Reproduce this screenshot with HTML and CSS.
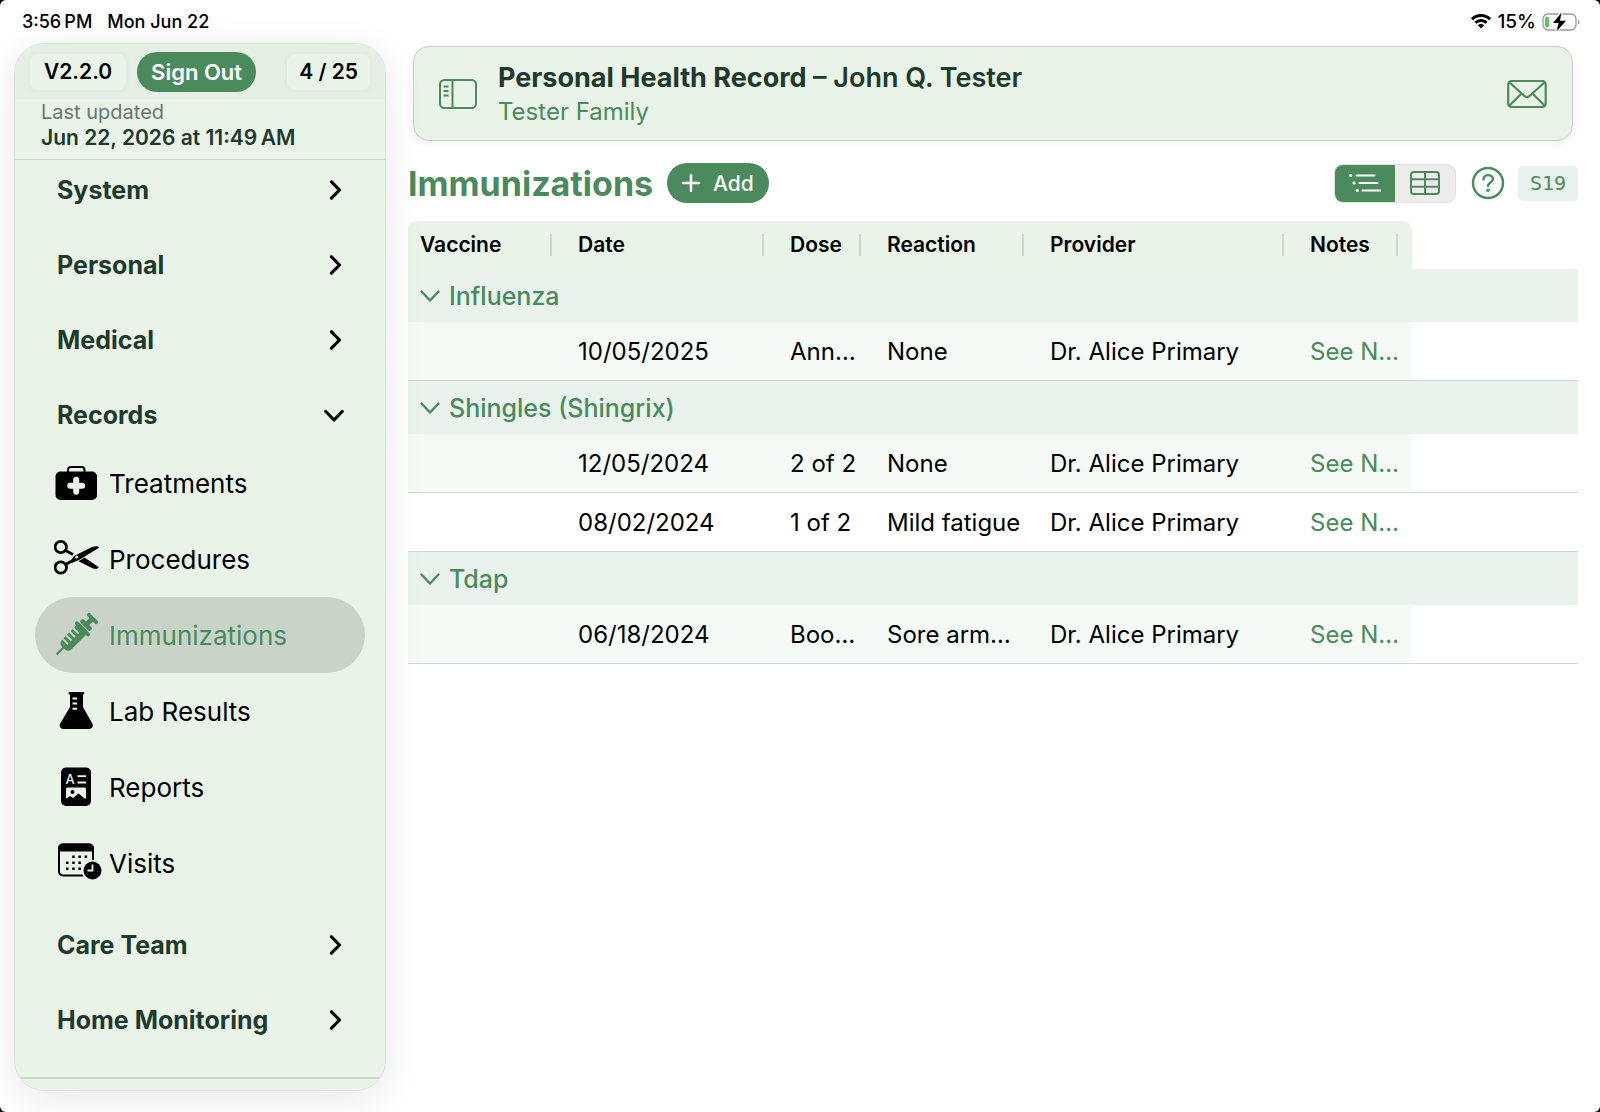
FILE: index.html
```
<!DOCTYPE html>
<html lang="en">
<head>
    <meta charset="UTF-8">
    <meta name="viewport" content="width=device-width, initial-scale=1.0">
    <title>Personal Health Record</title>
    <link rel="stylesheet" href="styles.css">
</head>
<body>
<div class="screen">

    <header class="status-bar">
        <div class="status-left">
            <span>3:56&#8239;PM</span>
            <span>Mon Jun 22</span>
        </div>
        <div class="status-right">
            <svg width="20" height="15" viewBox="0 0 20 15" fill="none" stroke="#000" stroke-width="3">
                <path d="M1 5.2a12.8 12.8 0 0 1 18 0"/>
                <path d="M4.4 8.7a8 8 0 0 1 11.2 0"/>
                <path d="M10 14.5l-3.2-3.2a4.5 4.5 0 0 1 6.4 0z" fill="#000" stroke="none"/>
            </svg>
            <span>15%</span>
            <svg width="38" height="20" viewBox="0 0 38 20">
                <rect x="1" y="2" width="33" height="16" rx="5" fill="none" stroke="#9b9b9b" stroke-width="1.3"/>
                <path d="M36 7.5v5c2-1 2-4 0-5z" fill="#9b9b9b"/>
                <rect x="3" y="4.500" width="4" height="11" rx="2" fill="#5ac75a"/>
                <path d="M19.500 .500L11 11h5.500l-2 8.500L24 8.800h-6z" fill="#000" stroke="#fff" stroke-width="2.500" paint-order="stroke"/>
            </svg>
        </div>
    </header>

    <div class="layout">
        <aside class="sidebar">
            <div class="sidebar-top">
                <span class="chip">V2.2.0</span>
                <button class="sign-out">Sign Out</button>
                <span class="chip count">4 / 25</span>
            </div>
            <div class="updated">
                <span class="updated-label">Last updated</span>
                <strong class="updated-date">Jun 22, 2026 at 11:49&#8239;AM</strong>
            </div>

            <nav class="nav">
                <button class="group">System
                    <svg class="chev" viewBox="0 0 20 20"><path d="M7.500 1.800l8 8.200-8 8.200"/></svg>
                </button>
                <button class="group">Personal
                    <svg class="chev" viewBox="0 0 20 20"><path d="M7.500 1.800l8 8.200-8 8.200"/></svg>
                </button>
                <button class="group">Medical
                    <svg class="chev" viewBox="0 0 20 20"><path d="M7.500 1.800l8 8.200-8 8.200"/></svg>
                </button>
                <button class="group">Records
                    <svg class="chev" viewBox="0 0 20 20"><path d="M1.800 6.500l8.200 8.500 8.200-8.500"/></svg>
                </button>
                <div class="items">
                    <a class="item" href="#treatments">
                        <svg viewBox="0 0 48 44">
                            <path d="M14 12V9a3 3 0 0 1 3-3h10.500a3 3 0 0 1 3 3v3" fill="none" stroke="currentColor" stroke-width="2"/>
                            <rect x="1.500" y="10.500" width="41.500" height="28.500" rx="5"/>
                            <path class="cut" d="M22.200 18.700v12M16.200 24.700h12" stroke-width="6" stroke-linecap="round"/>
                        </svg>
                        Treatments
                    </a>
                    <a class="item" href="#procedures">
                        <svg viewBox="0 0 48 44">
                            <g fill="none" stroke="currentColor" stroke-width="2.800">
                                <circle cx="6.800" cy="10" r="5.700"/>
                                <circle cx="6.800" cy="30.500" r="5.700"/>
                                <path d="M11.500 13.500l7.500 4M11.500 27.500l8-4.500"/>
                            </g>
                            <path d="M17 24.500c1-1.500 1-4 4-6L38 10c3.500-1.300 7-.8 7 .7L25 23l-7.500 3z"/>
                            <path d="M24.500 24.200l6-3.700 14 9.500c1 1.700-3 2.500-6 1.300z"/>
                            <circle class="cut-fill" cx="22.800" cy="20" r="1.600"/>
                        </svg>
                        Procedures
                    </a>
                    <a class="item active" href="#immunizations">
                        <svg viewBox="0 0 48 44">
                            <g transform="translate(2.500 41.500) rotate(-45)">
                                <rect x="0" y="-1.100" width="13" height="2.200" rx="1.100"/>
                                <rect x="9.500" y="-6.500" width="29" height="13.500" rx="4.500"/>
                                <path class="cut" d="M15.500-8v8M20.500-8v8M25.500-8v8M30.500-8v8" stroke-width="2" stroke-linecap="round"/>
                                <rect x="34.500" y="-9.500" width="4" height="19.500" rx="2"/>
                                <rect x="39.500" y="-7" width="4.500" height="14" rx="1.500"/>
                                <rect x="43" y="-2.500" width="8" height="5"/>
                                <rect x="49" y="-7" width="3.800" height="14" rx="1.900"/>
                            </g>
                        </svg>
                        Immunizations
                    </a>
                    <a class="item" href="#labs">
                        <svg viewBox="0 0 48 44">
                            <path d="M15.500 3h13.500a1.300 1.300 0 0 1 0 2.600V18L38 34c2 3 0 6-3 6H9.500c-3 0-5-3-3-6L16 18V5.600a1.300 1.300 0 0 1-.5-2.600z"/>
                            <path class="cut" d="M18.500 9.500h4.500M18.500 14.500h4.500M18.500 19.800h4.500" stroke-width="2"/>
                        </svg>
                        Lab Results
                    </a>
                    <a class="item" href="#reports">
                        <svg viewBox="0 0 48 44">
                            <rect x="7" y="2.500" width="30" height="38.500" rx="5"/>
                            <text class="cut-fill icon-letter" x="11.500" y="19">A</text>
                            <path class="cut" d="M23.500 11.200h8.500M23.500 17.500h8.500" stroke-width="1.800"/>
                            <rect class="cut-fill" x="12" y="22.500" width="20" height="11.500" rx="1.500"/>
                            <circle cx="18.500" cy="27" r="2"/>
                            <path d="M12 35v-1l4-3 3 2 5.500-4.500 7.500 6V35z"/>
                        </svg>
                        Reports
                    </a>
                    <a class="item" href="#visits">
                        <svg viewBox="0 0 48 44">
                            <rect x="5" y="3.500" width="34" height="31" rx="4" fill="none" stroke="currentColor" stroke-width="2"/>
                            <path d="M4 10.500V7a4.500 4.500 0 0 1 4.500-4.500h27A4.500 4.500 0 0 1 40 7v3.500z"/>
                            <path d="M18.200 15.700h15M12 21.700h15M12 27.700h15" fill="none" stroke="currentColor" stroke-width="2.500" stroke-dasharray="2.500 3.700"/>
                            <circle class="cut-fill" cx="38.500" cy="29.500" r="10.800"/>
                            <circle cx="38.500" cy="29.500" r="9"/>
                            <path class="cut" d="M38.500 23.500v6h-5" stroke-width="1.800"/>
                        </svg>
                        Visits
                    </a>
                </div>
                <button class="group">Care Team
                    <svg class="chev" viewBox="0 0 20 20"><path d="M7.500 1.800l8 8.200-8 8.200"/></svg>
                </button>
                <button class="group">Home Monitoring
                    <svg class="chev" viewBox="0 0 20 20"><path d="M7.500 1.800l8 8.200-8 8.200"/></svg>
                </button>
            </nav>
        </aside>

        <main class="main">
            <section class="record-card">
                <button class="icon-btn" aria-label="Toggle sidebar">
                    <svg width="38" height="30" viewBox="0 0 38 30" fill="none" stroke="currentColor" stroke-width="2">
                        <rect x="1" y="1" width="36" height="28" rx="4.500"/>
                        <path d="M13.500 1v28M4.500 7.500h5M4.500 12h5M4.500 16.500h5"/>
                    </svg>
                </button>
                <div class="record-text">
                    <h1 class="record-title">Personal Health Record <span class="patient">– John Q. Tester</span></h1>
                    <p class="record-family">Tester Family</p>
                </div>
                <button class="icon-btn" aria-label="Messages">
                    <svg width="40" height="28" viewBox="0 0 40 28" fill="none" stroke="currentColor" stroke-width="2.200">
                        <rect x="1.200" y="1" width="37.500" height="26" rx="3.500"/>
                        <path d="M2 2l15.500 14a3.500 3.500 0 0 0 5 0L38 2M2 26l12.500-12.500M38 26L25.500 13.500"/>
                    </svg>
                </button>
            </section>

            <div class="toolbar">
                <h2 class="page-title">Immunizations</h2>
                <button class="add-btn">
                    <svg width="18" height="18" viewBox="0 0 18 18"><path d="M9 1v16M1 9h16" stroke="#fff" stroke-width="2.500" stroke-linecap="round"/></svg>
                    Add
                </button>
                <div class="segmented">
                    <button class="seg on" aria-label="Grouped list">
                        <svg width="32" height="20" viewBox="0 0 32 20" fill="none" stroke="currentColor" stroke-width="2" stroke-linecap="round">
                            <path d="M7.500 2.500h18M10.500 10h18M13.500 17.500h18"/>
                            <path d="M1.700 2.500h.01M5 10h.01M8.200 17.500h.01" stroke-width="3.200"/>
                        </svg>
                    </button>
                    <button class="seg" aria-label="Table">
                        <svg width="30" height="24" viewBox="0 0 30 24" fill="none" stroke="currentColor" stroke-width="2">
                            <rect x="1" y="1" width="28" height="22" rx="3"/>
                            <path d="M15 1v22M1 8.300h28M1 15.700h28"/>
                        </svg>
                    </button>
                </div>
                <button class="icon-btn" aria-label="Help">
                    <svg width="34" height="34" viewBox="0 0 34 34" fill="none" stroke="currentColor" stroke-width="2.400" stroke-linecap="round">
                        <circle cx="17" cy="17" r="15"/>
                        <path d="M12.500 13.500c0-6 9.500-5.500 9.500-.5 0 3.500-5 3.500-5 7"/>
                        <circle cx="17" cy="24.200" r="1.700" fill="currentColor" stroke="none"/>
                    </svg>
                </button>
                <span class="code">S19</span>
            </div>

            <table class="records">
                <colgroup>
                    <col class="c-vaccine"><col class="c-date"><col class="c-dose"><col class="c-reaction"><col class="c-provider"><col class="c-notes"><col>
                </colgroup>
                <thead>
                    <tr>
                        <th><span>Vaccine</span></th>
                        <th><span>Date</span></th>
                        <th><span>Dose</span></th>
                        <th><span>Reaction</span></th>
                        <th><span>Provider</span></th>
                        <th><span>Notes</span></th>
                        <td></td>
                    </tr>
                </thead>
                <tbody>
                    <tr class="vaccine">
                        <th colspan="7"><button class="toggle"><svg viewBox="0 0 20 12"><path d="M1.500 1.500L10 10.500l8.500-9"/></svg>Influenza</button></th>
                    </tr>
                    <tr class="tint">
                        <td></td><td>10/05/2025</td><td>Ann…</td><td>None</td><td>Dr. Alice Primary</td><td><a href="#notes">See N…</a></td><td></td>
                    </tr>
                </tbody>
                <tbody>
                    <tr class="vaccine">
                        <th colspan="7"><button class="toggle"><svg viewBox="0 0 20 12"><path d="M1.500 1.500L10 10.500l8.500-9"/></svg>Shingles (Shingrix)</button></th>
                    </tr>
                    <tr class="tint">
                        <td></td><td>12/05/2024</td><td>2 of 2</td><td>None</td><td>Dr. Alice Primary</td><td><a href="#notes">See N…</a></td><td></td>
                    </tr>
                    <tr>
                        <td></td><td>08/02/2024</td><td>1 of 2</td><td>Mild fatigue</td><td>Dr. Alice Primary</td><td><a href="#notes">See N…</a></td><td></td>
                    </tr>
                </tbody>
                <tbody>
                    <tr class="vaccine">
                        <th colspan="7"><button class="toggle"><svg viewBox="0 0 20 12"><path d="M1.500 1.500L10 10.500l8.500-9"/></svg>Tdap</button></th>
                    </tr>
                    <tr class="tint">
                        <td></td><td>06/18/2024</td><td>Boo…</td><td>Sore arm…</td><td>Dr. Alice Primary</td><td><a href="#notes">See N…</a></td><td></td>
                    </tr>
                </tbody>
            </table>
        </main>
    </div>

</div>
</body>
</html>
```
FILE: styles.css
```
:root {
    --green: #4a8a5c;
    --dark: #20392b;
    --mint: #e9f3e8;
    --line: #cdd5cf;
}
* {
    box-sizing: border-box;
}
html {
    background: #000;
}
body {
    margin: 0;
    font-family: Inter, "Liberation Sans", sans-serif;
    color: #000;
}
button {
    border: 0;
    padding: 0;
    background: none;
    font: inherit;
    color: inherit;
    cursor: pointer;
}
a {
    color: inherit;
    text-decoration: none;
}
svg {
    display: block;
    flex: none;
}
.screen {
    min-height: 100vh;
    display: flex;
    flex-direction: column;
    background: #fff;
    border-radius: 6px;
    overflow: hidden;
}

/* status bar */
.status-bar {
    display: flex;
    justify-content: space-between;
    align-items: center;
    height: 43px;
    padding: 0 20px 0 22px;
    font-size: 19px;
    font-weight: 500;
}
.status-left {
    display: flex;
    gap: 15px;
    font-size: 18px;
}
.status-right {
    display: flex;
    align-items: center;
    gap: 6px;
}

.layout {
    flex: 1;
    display: flex;
    gap: 22px;
    padding: 0 22px 21px 14px;
}

/* sidebar */
.sidebar {
    position: relative;
    z-index: 1;
    flex: none;
    width: 372px;
    background: var(--mint);
    border: 1px solid #dde6de;
    border-radius: 30px;
    box-shadow: 0 8px 40px rgba(0, 0, 0, 0.09);
    overflow: hidden;
    display: flex;
    flex-direction: column;
}
.sidebar-top {
    display: flex;
    align-items: center;
    height: 55px;
    padding: 0 15px;
    background: #e5efe5;
}
.chip {
    padding: 0 14px;
    line-height: 36px;
    font-size: 21px;
    font-weight: 600;
    border-radius: 8px;
    background: var(--mint);
    box-shadow: 0 0 8px rgba(0, 0, 0, 0.04);
}
.count {
    margin-left: auto;
    padding: 0 12px;
}
.sign-out {
    height: 40px;
    margin-left: 11px;
    padding: 0 14px;
    border-radius: 20px;
    background: var(--green);
    color: #fff;
    font-size: 22px;
    font-weight: 600;
}
.updated {
    display: flex;
    flex-direction: column;
    height: 61px;
    padding: 0 26px;
    border-bottom: 1px solid var(--line);
}
.updated-label {
    line-height: 26px;
    font-size: 20px;
    color: #6c766e;
}
.updated-date {
    line-height: 26px;
    font-size: 21px;
    font-weight: 600;
    color: var(--dark);
}
.nav {
    flex: 1;
    display: flex;
    flex-direction: column;
    margin-bottom: 11px;
    border-bottom: 2px solid var(--line);
}
.group {
    display: flex;
    justify-content: space-between;
    align-items: center;
    height: 60px;
    padding: 0 41px 0 42px;
    font-size: 25px;
    font-weight: 700;
    color: var(--dark);
}
.group + .group {
    margin-top: 15px;
}
.items + .group {
    margin-top: 14px;
}
.chev {
    width: 20px;
    height: 20px;
    fill: none;
    stroke: #000;
    stroke-width: 3.2px;
    stroke-linecap: round;
    stroke-linejoin: round;
}
.items {
    padding: 0 20px;
}
.item {
    display: flex;
    align-items: center;
    gap: 7px;
    height: 76px;
    padding-left: 19px;
    border-radius: 38px;
    font-size: 26px;
}
.item svg {
    width: 48px;
    height: 44px;
    fill: currentColor;
}
.item .cut {
    fill: none;
    stroke: var(--mint);
}
.item .cut-fill {
    fill: var(--mint);
}
.icon-letter {
    font-size: 13px;
    font-weight: 500;
}
.active {
    background: #c9d3c8;
    color: var(--green);
}
.active .cut {
    stroke: #c9d3c8;
}

/* main column */
.main {
    flex: 1;
    min-width: 0;
    padding-top: 3px;
}
.icon-btn {
    color: var(--green);
}
.record-card {
    display: flex;
    align-items: center;
    height: 95px;
    margin: 0 5px;
    padding: 0 25px;
    background: var(--mint);
    border: 1px solid #c8cfc9;
    border-radius: 16px;
    box-shadow: 0 3px 8px rgba(0, 0, 0, 0.06);
}
.record-text {
    flex: 1;
    margin-left: 21px;
    padding-top: 2px;
}
.record-title {
    margin: 0;
    line-height: 34px;
    font-size: 27px;
    font-weight: 700;
    color: var(--dark);
}
.patient {
    font-weight: 600;
}
.record-family {
    margin: 0;
    line-height: 34px;
    font-size: 24px;
    color: var(--green);
}
.toolbar {
    display: flex;
    align-items: center;
    height: 40px;
    margin: 22px 0 18px;
}
.page-title {
    margin: 0;
    font-size: 34px;
    font-weight: 700;
    color: var(--green);
}
.add-btn {
    display: flex;
    align-items: center;
    gap: 13px;
    height: 40px;
    margin-left: 14px;
    padding: 0 15px;
    border-radius: 20px;
    background: var(--green);
    color: #fff;
    font-size: 21px;
    font-weight: 500;
}
.segmented {
    display: flex;
    margin: 0 15px 0 auto;
    border: 1px solid #dfe2df;
    border-radius: 9px;
    background: #ececec;
    overflow: hidden;
}
.seg {
    display: flex;
    justify-content: center;
    align-items: center;
    width: 60px;
    height: 37px;
    color: var(--green);
}
.seg.on {
    background: var(--green);
    color: #fff;
}
.code {
    margin-left: 13px;
    padding: 0 12px;
    line-height: 35px;
    border-radius: 5px;
    background: #e9f1ec;
    color: var(--green);
    font-family: "DejaVu Sans Mono", monospace;
    font-size: 20px;
}

/* immunization table */
.records {
    width: 100%;
    table-layout: fixed;
    border-collapse: separate;
    border-spacing: 0;
}
.c-vaccine { width: 158px; }
.c-date { width: 212px; }
.c-dose { width: 97px; }
.c-reaction { width: 163px; }
.c-provider { width: 260px; }
.c-notes { width: 114px; }
.records thead th {
    height: 48px;
    padding: 0 14px 0 12px;
    background: var(--mint);
    text-align: left;
    font-size: 21px;
    font-weight: 600;
}
.records thead th span {
    display: block;
    line-height: 22px;
    border-right: 2px solid #cdd3cd;
}
.records thead th:first-child {
    border-top-left-radius: 9px;
}
.records thead th:nth-child(6) {
    border-top-right-radius: 9px;
}
.records tbody td {
    height: 59px;
    padding: 0 0 0 12px;
    border-bottom: 1px solid #d2d6d3;
    font-size: 24px;
    white-space: nowrap;
}
.tint td {
    background: #f5faf6;
}
.records .tint td:last-child {
    background: none;
}
.records a {
    color: var(--green);
}
.vaccine th {
    height: 53px;
    padding: 0 12px;
    background: #e9f2ed;
    text-align: left;
}
.toggle {
    display: flex;
    align-items: center;
    gap: 9px;
    font-size: 25px;
    font-weight: 500;
    color: var(--green);
}
.toggle svg {
    width: 20px;
    height: 12px;
    fill: none;
    stroke: currentColor;
    stroke-width: 2.4px;
    stroke-linecap: round;
    stroke-linejoin: round;
}
```
